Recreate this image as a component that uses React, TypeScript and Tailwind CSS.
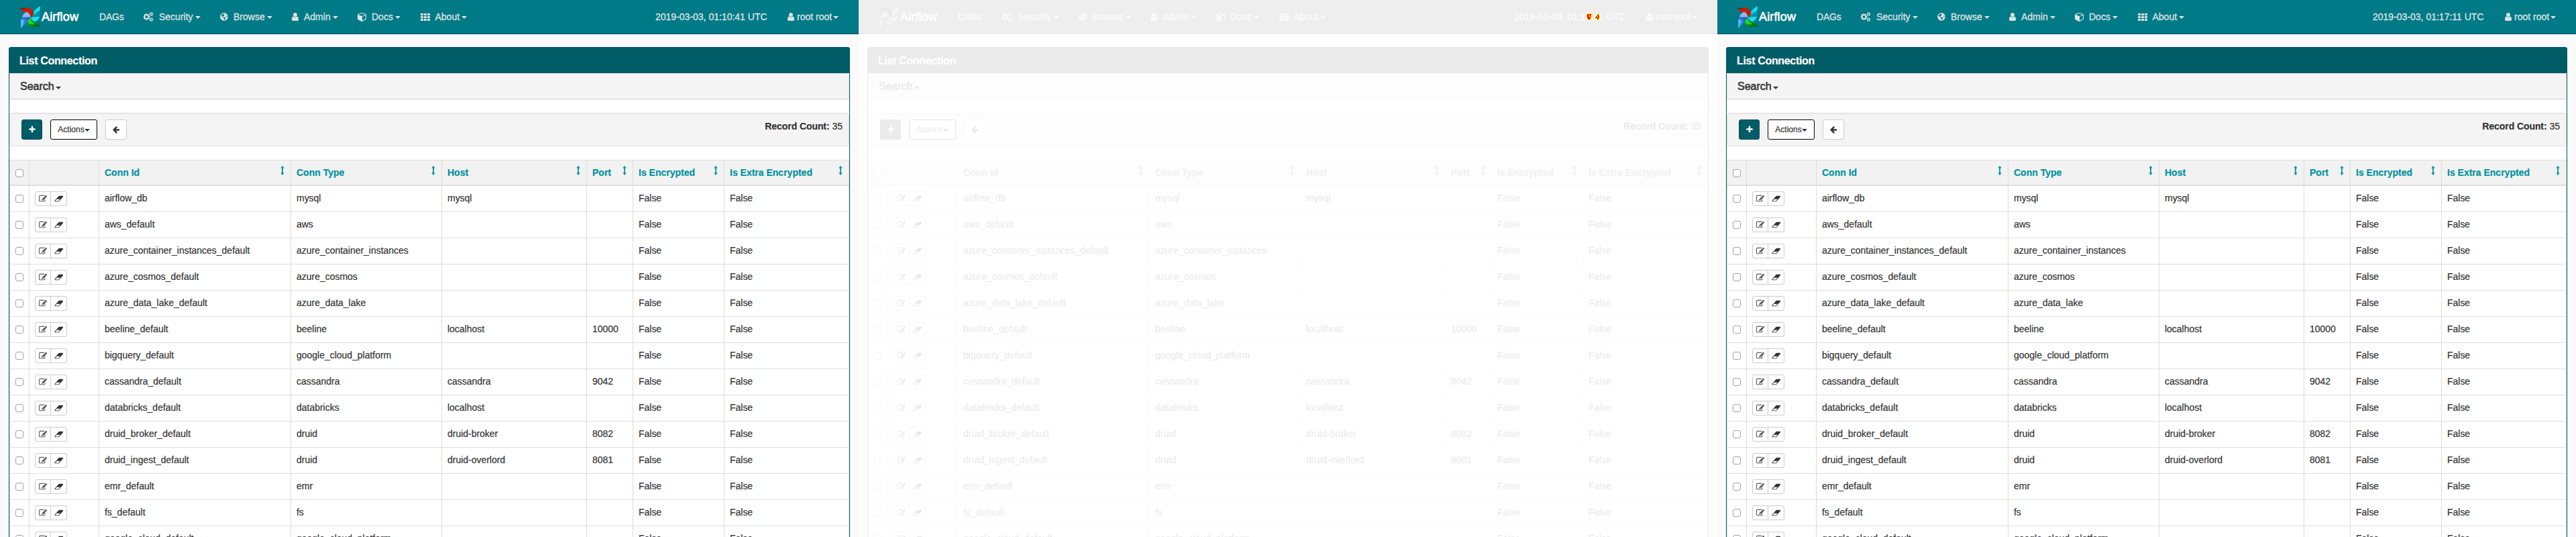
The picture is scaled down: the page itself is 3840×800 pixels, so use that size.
import React from "react";
import { FaGlobeAmericas } from "react-icons/fa";

const USER =
  "M1536 1399q0 109-62.5 187t-150.5 78h-854q-88 0-150.5-78t-62.5-187q0-85 8.5-160.5t31.5-152 58.5-131 94-89 134.5-34.5q131 128 313 128t313-128q76 0 134.5 34.5t94 89 58.5 131 31.5 152 8.5 160.5zm-256-887q0 159-112.5 271.5t-271.5 112.5-271.5-112.5-112.5-271.5 112.5-271.5 271.5-112.5 271.5 112.5 112.5 271.5z";
const CUBE =
  "M896 1629l640-349v-636l-640 233v752zm-64-865l698-254-698-254-698 254zm832-252v768q0 35-18 65t-49 47l-704 384q-28 16-61 16t-61-16l-704-384q-31-17-49-47t-18-65v-768q0-40 23-73t61-47l704-256q22-8 44-8t44 8l704 256q38 14 61 47t23 73z";
const ERASER =
  "M960 1408l336-384h-768l-336 384h768zm1013-1077q15 34 9.5 71.5t-30.5 65.5l-896 1024q-38 44-96 44h-768q-38 0-69.5-20.5t-47.5-54.5q-15-34-9.5-71.5t30.5-65.5l896-1024q38-44 96-44h768q38 0 69.5 20.5t47.5 54.5z";
const EDIT =
  "M888 1184l116-116-152-152-116 116v56h96v96h56zm440-720q-16-16-33 1l-350 350q-17 17-1 33t33-1l350-350q17-17 1-33zm80 594v190q0 119-84.5 203.5t-203.5 84.5h-832q-119 0-203.5-84.5t-84.5-203.5v-832q0-119 84.5-203.5t203.5-84.5h832q63 0 117 25 15 7 18 23 3 17-9 29l-49 49q-14 14-32 8-23-6-45-6h-832q-66 0-113 47t-47 113v832q0 66 47 113t113 47h832q66 0 113-47t47-113v-126q0-13 9-22l64-64q15-15 35-7t20 29zm-96-738l288 288-672 672h-288v-288zm444 132l-92 92-288-288 92-92q28-28 68-28t68 28l152 152q28 28 28 68t-28 68z";
const PLUS =
  "M1600 736v192q0 40-28 68t-68 28h-416v416q0 40-28 68t-68 28h-192q-40 0-68-28t-28-68v-416h-416q-40 0-68-28t-28-68v-192q0-40 28-68t68-28h416v-416q0-40 28-68t68-28h192q40 0 68 28t28 68v416h416q40 0 68 28t28 68z";
const ARROW_LEFT =
  "M1664 896v128q0 53-32.5 90.5t-84.5 37.5h-704l293 294q38 36 38 90t-38 90l-75 76q-37 37-90 37-52 0-91-37l-651-652q-37-37-37-90 0-52 37-91l651-650q38-38 91-38 52 0 90 38l75 74q38 38 38 91t-38 91l-293 293h704q52 0 84.5 37.5t32.5 90.5z";
const COGS =
  "M832 896q0-106-75-181t-181-75-181 75-75 181 75 181 181 75 181-75 75-181zm768 512q0-52-38-90t-90-38-90 38-38 90q0 53 37.5 90.5t90.5 37.5 90.5-37.5 37.5-90.5zm0-1024q0-52-38-90t-90-38-90 38-38 90q0 53 37.5 90.5t90.5 37.5 90.5-37.5 37.5-90.5zm-384 421v185q0 10-7 19.5t-16 10.5l-155 24q-11 35-32 76 34 48 90 115 7 11 7 20 0 12-7 19-23 30-82.5 89.5t-78.5 59.5q-11 0-21-7l-115-90q-37 19-77 31-11 108-23 155-7 24-30 24h-186q-11 0-20-7.5t-10-17.5l-23-153q-34-10-75-31l-118 89q-7 7-20 7-11 0-21-8-144-133-144-160 0-9 7-19 10-14 41-53t47-61q-23-44-35-82l-152-24q-10-1-17-9.5t-7-19.5v-185q0-10 7-19.5t16-10.5l155-24q11-35 32-76-34-48-90-115-7-11-7-20 0-12 7-20 22-30 82-89t79-59q11 0 21 7l115 90q34-18 77-32 11-108 23-154 7-24 30-24h186q11 0 20 7.5t10 17.5l23 153q34 10 75 31l118-89q8-7 20-7 11 0 21 8 144 133 144 160 0 8-7 19-12 16-42 54t-45 60q23 48 34 82l152 23q10 2 17 10.5t7 19.5zm640 533v140q0 16-149 31-12 27-30 52 51 113 51 138 0 4-4 7-122 71-124 71-8 0-46-47t-52-68q-20 2-30 2t-30-2q-14 21-52 68t-46 47q-2 0-124-71-4-3-4-7 0-25 51-138-18-25-30-52-149-15-149-31v-140q0-16 149-31 13-29 30-52-51-113-51-138 0-4 4-7 4-2 35-20t59-34 30-16q8 0 46 46.5t52 67.5q20-2 30-2t30 2q51-71 92-112l6-2q4 0 124 70 4 3 4 7 0 25-51 138 17 23 30 52 149 15 149 31zm0-1024v140q0 16-149 31-12 27-30 52 51 113 51 138 0 4-4 7-122 71-124 71-8 0-46-47t-52-68q-20 2-30 2t-30-2q-14 21-52 68t-46 47q-2 0-124-71-4-3-4-7 0-25 51-138-18-25-30-52-149-15-149-31v-140q0-16 149-31 13-29 30-52-51-113-51-138 0-4 4-7 4-2 35-20t59-34 30-16q8 0 46 46.5t52 67.5q20-2 30-2t30 2q51-71 92-112l6-2q4 0 124 70 4 3 4 7 0 25-51 138 17 23 30 52 149 15 149 31z";

function Glyph({ d, box, className }: { d: string; box: string; className: string }) {
  return (
    <svg viewBox={box} className={`shrink-0 fill-current ${className}`}>
      <path d={d} />
    </svg>
  );
}

function Caret({ className = "" }: { className?: string }) {
  return (
    <svg viewBox="0 0 8 4" className={`h-1 w-2 shrink-0 fill-current ${className}`}>
      <path d="M0 0h8L4 4z" />
    </svg>
  );
}

function Grid3() {
  return (
    <svg viewBox="0 0 14 11" className="h-[11px] w-[14px] shrink-0 fill-current">
      {[0, 4, 8].map((y) =>
        [0, 5, 10].map((x) => <rect key={`${x}-${y}`} x={x} y={y} width="4" height="3" rx="0.6" />)
      )}
    </svg>
  );
}

function Pinwheel({ id }: { id: string }) {
  return (
    <svg viewBox="36 24 106 104" className="h-[35px] w-[35px] shrink-0">
      <defs>
        <linearGradient id={`${id}r`} x1="0" y1="0" x2="0.6" y2="1">
          <stop offset="0" stopColor="#7d1206" />
          <stop offset="0.5" stopColor="#d92408" />
          <stop offset="1" stopColor="#a81505" />
        </linearGradient>
        <linearGradient id={`${id}c`} x1="1" y1="0" x2="0" y2="1">
          <stop offset="0" stopColor="#12f4fb" />
          <stop offset="1" stopColor="#0bb9d8" />
        </linearGradient>
        <linearGradient id={`${id}b`} x1="1" y1="0" x2="0" y2="1">
          <stop offset="0" stopColor="#2a3fc4" />
          <stop offset="1" stopColor="#45b8ff" />
        </linearGradient>
        <linearGradient id={`${id}g`} x1="0" y1="0" x2="1" y2="1">
          <stop offset="0" stopColor="#12c81c" />
          <stop offset="1" stopColor="#045a0a" />
        </linearGradient>
      </defs>
      <path d="M132 26L131 56L104 72L90 77L100 60L106 46Z" fill={`url(#${id}c)`} />
      <path d="M132 44L131 72L112 76L90 77Z" fill="#078ea6" />
      <path d="M90 77L131 74Q124 92 108 97Q96 92 90 77Z" fill="#17dff0" />
      <path d="M40 34H84Q104 44 103 62Q99 72 90 76Q88 58 70 52L58 56Q52 42 40 34Z" fill={`url(#${id}r)`} />
      <path d="M70 36H84Q102 46 102 62Q98 72 91 73Q92 48 70 36Z" fill="#c41c06" />
      <path d="M50 76Q58 56 72 53Q88 58 89 77Z" fill="#8fb4f4" />
      <path d="M46 82Q62 76 89 77Q76 100 62 108L46 126Z" fill={`url(#${id}b)`} />
      <path d="M46 88L60 90L54 108L46 126Z" fill="#4fc0ff" />
      <path d="M89 78Q94 96 108 98Q124 104 138 119H88Q72 112 76 92Z" fill={`url(#${id}g)`} />
      <path d="M88 79Q92 100 108 106Q96 112 80 104Q74 92 88 79Z" fill="#1fd62a" />
    </svg>
  );
}

function NavItem({ icon, label, width }: { icon: React.ReactNode; label: string; width: string }) {
  return (
    <div className={`flex h-5 shrink-0 items-center ${width}`}>
      {icon}
      <span className="ml-2">{label}</span>
      <Caret className="ml-[3px] mt-px" />
    </div>
  );
}

function Navbar({ time, id }: { time: string; id: string }) {
  return (
    <div className="flex h-[51px] items-start border-b border-[#004f58] bg-[#007a87] text-[14px] leading-5 text-[#dfe3e3] [-webkit-text-stroke:0.3px_currentColor]">
      <div className="flex w-[148px] shrink-0 pl-7">
        <div className="pt-2">
          <Pinwheel id={id} />
        </div>
        <span className="-ml-px pt-[15px] text-[18px] tracking-[0.15px] text-white [-webkit-text-stroke:0.6px_white]">Airflow</span>
      </div>
      <div className="flex grow pt-[15px]">
        <span className="w-[66px] shrink-0 tracking-[-0.2px]">DAGs</span>
        <NavItem width="w-[114px]" label="Security" icon={<Glyph d={COGS} box="0 0 1920 1792" className="h-[14px] w-[15px]" />} />
        <NavItem width="w-[107px]" label="Browse" icon={<FaGlobeAmericas className="h-3 w-3 shrink-0" />} />
        <NavItem width="w-[98px]" label="Admin" icon={<Glyph d={USER} box="256 0 1280 1792" className="h-[14px] w-[10px]" />} />
        <NavItem width="w-[93.5px]" label="Docs" icon={<Glyph d={CUBE} box="0 0 1664 1792" className="h-[14px] w-[13px]" />} />
        <NavItem width="w-[80px]" label="About" icon={<Grid3 />} />
      </div>
      <div className="flex shrink-0 pt-[15px]">
        <span className="w-[197px]">{time}</span>
        <div className="flex w-[106px] items-center">
          <Glyph d={USER} box="256 0 1280 1792" className="h-[14px] w-[10px]" />
          <span className="ml-1">root root</span>
          <Caret className="ml-[2px] mt-px" />
        </div>
      </div>
    </div>
  );
}

const COLS = "grid grid-cols-[30px_104px_286px_225px_216px_69px_136px_186px]";

const ROWS: [string, string, string, string][] = [
  ["airflow_db", "mysql", "mysql", ""],
  ["aws_default", "aws", "", ""],
  ["azure_container_instances_default", "azure_container_instances", "", ""],
  ["azure_cosmos_default", "azure_cosmos", "", ""],
  ["azure_data_lake_default", "azure_data_lake", "", ""],
  ["beeline_default", "beeline", "localhost", "10000"],
  ["bigquery_default", "google_cloud_platform", "", ""],
  ["cassandra_default", "cassandra", "cassandra", "9042"],
  ["databricks_default", "databricks", "localhost", ""],
  ["druid_broker_default", "druid", "druid-broker", "8082"],
  ["druid_ingest_default", "druid", "druid-overlord", "8081"],
  ["emr_default", "emr", "", ""],
  ["fs_default", "fs", "", ""],
  ["google_cloud_default", "google_cloud_platform", "", ""],
];

function Check() {
  return <span className="block h-3 w-3 rounded-[3px] border border-[#a3a3a3] bg-white" />;
}

function HeadCell({ label }: { label: string }) {
  return (
    <div className="flex justify-between border-r border-[#ddd] pl-2 pr-[9px] pt-2">
      <span className="whitespace-nowrap">{label}</span>
      <svg viewBox="0 0 6 14" className="h-[14px] w-[6px] shrink-0 fill-current">
        <path d="M3 0L5.8 3.4H3.9V10.6H5.8L3 14L.2 10.6H2.1V3.4H.2Z" />
      </svg>
    </div>
  );
}

function Cell({ children }: { children?: React.ReactNode }) {
  return <div className="whitespace-nowrap border-r border-[#ddd] pl-2 pt-2 tracking-[-0.02px]">{children}</div>;
}

function Screen({ time, id }: { time: string; id: string }) {
  return (
    <div className="h-[800px] w-[1280px] overflow-hidden bg-[#fafafa] text-[14px] leading-5 text-[#333] [-webkit-text-stroke:0.2px_currentColor]">
      <Navbar time={time} id={id} />
      <div className="mx-[13px] mt-[19px] rounded-t-[4px] border-x border-[#005c66] bg-white">
        <div className="-mx-px h-[39px] rounded-t-[4px] bg-[#005c66] pl-[16px] pt-[11px] text-[16px] font-bold leading-5 tracking-[-0.33px] text-white">
          List Connection
        </div>
        <div className="flex h-[39px] items-start rounded-[3px] border border-[#e3e3e3] border-b-[#dadada] bg-[#f4f4f4] pl-[15px] pt-[9px] text-[16px] leading-5 shadow-[0_1px_1px_rgba(0,0,0,0.05)]">
          <span className="[-webkit-text-stroke:0.55px_currentColor]">Search</span>
          <Caret className="ml-[2.5px] mt-[10px]" />
        </div>
        <div className="mt-5 flex h-[50px] justify-between rounded-[4px] border border-[#e0e0e0] bg-[#f4f4f4] pl-[17px] pr-[9px] pt-[9px] shadow-[inset_0_1px_1px_rgba(0,0,0,0.05)]">
          <div className="flex text-[12px]">
            <div className="flex h-[30px] w-[31px] items-center justify-center rounded-[3px] border border-[#004f58] bg-[#005c66] text-white">
              <Glyph d={PLUS} box="0 0 1792 1792" className="h-3 w-3" />
            </div>
            <div className="ml-3 flex h-[30px] w-[70px] items-center justify-center rounded-[3px] border border-black bg-white">
              <span className="-mt-px">Actions</span>
              <Caret className="mt-px" />
            </div>
            <div className="ml-3 flex h-[30px] w-8 items-center justify-center rounded-[3px] border border-[#ccc] bg-white">
              <Glyph d={ARROW_LEFT} box="0 0 1792 1792" className="h-3 w-3" />
            </div>
          </div>
          <div>
            <b className="tracking-[-0.08px]">Record Count:</b> 35
          </div>
        </div>
        <div className={`${COLS} mt-5 h-[39px] border-b-2 border-t border-[#ddd] bg-[#f2f2f2] font-bold text-[#0092a2]`}>
          <div className="border-x border-[#ddd] pl-2 pt-[13px]">
            <Check />
          </div>
          <div className="border-r border-[#ddd]" />
          <HeadCell label="Conn Id" />
          <HeadCell label="Conn Type" />
          <HeadCell label="Host" />
          <HeadCell label="Port" />
          <HeadCell label="Is Encrypted" />
          <HeadCell label="Is Extra Encrypted" />
        </div>
        {ROWS.map(([name, type, host, port]) => (
          <div key={name} className={`${COLS} h-[39px] border-b border-[#ddd]`}>
            <div className="border-x border-[#ddd] pl-2 pt-[13px]">
              <Check />
            </div>
            <div className="border-r border-[#ddd] pl-2 pt-2">
              <div className="flex h-[22px] w-12 rounded-[3px] border border-[#ccc] bg-white">
                <div className="flex w-[23px] items-center justify-center border-r border-[#ccc]">
                  <Glyph d={EDIT} box="0 0 1792 1792" className="h-3 w-3" />
                </div>
                <div className="flex grow items-center justify-center">
                  <Glyph d={ERASER} box="0 0 2048 1792" className="h-3 w-[13.7px]" />
                </div>
              </div>
            </div>
            <Cell>{name}</Cell>
            <Cell>{type}</Cell>
            <Cell>{host}</Cell>
            <Cell>{port}</Cell>
            <Cell>False</Cell>
            <Cell>False</Cell>
          </div>
        ))}
      </div>
    </div>
  );
}

// Changed pixels: r = differing core, y = anti-aliased edge.
const MARKS = [
  ".yyyyyyy.........yy.",
  "yrrrrrry........yry.",
  "yrryrrry.......yrry.",
  "yrrryryy......yyrry.",
  "yrrryryy......yryrry",
  "yrryrryy.....yrryrry",
  "yrrrrry.....yrrrrryy",
  ".yrrrry.....yyyyrryy",
  ".yrrry.........yrry.",
  "..yyy...........yyy.",
];

function Marks() {
  return (
    <svg viewBox="0 0 20 10" shapeRendering="crispEdges" className="absolute left-[1085px] top-5 h-[10px] w-5">
      {MARKS.flatMap((row, y) =>
        [...row].map((c, x) =>
          c === "." ? null : (
            <rect key={`${x}-${y}`} x={x} y={y} width="1" height="1" fill={c === "r" ? "#ff0000" : "#ffff00"} />
          )
        )
      )}
    </svg>
  );
}

export default function App() {
  return (
    <div className="flex h-[800px] w-[3840px] overflow-hidden bg-white font-['Liberation_Sans',Arial,sans-serif]">
      <Screen time="2019-03-03, 01:10:41 UTC" id="a" />
      <div className="relative h-[800px] w-[1280px] shrink-0 bg-white">
        <div className="opacity-10 grayscale">
          <Screen time="2019-03-03, 01:10:41 UTC" id="b" />
        </div>
        <Marks />
      </div>
      <Screen time="2019-03-03, 01:17:11 UTC" id="c" />
    </div>
  );
}
